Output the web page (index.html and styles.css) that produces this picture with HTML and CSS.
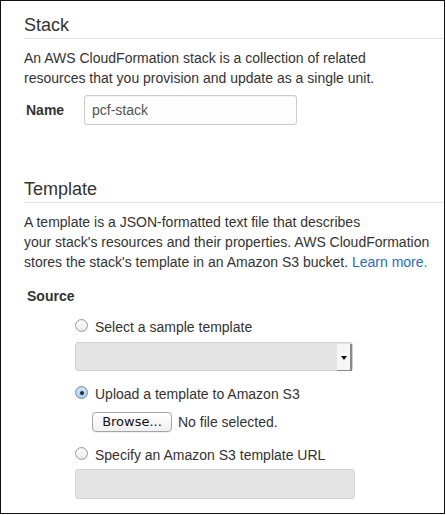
FILE: index.html
```html
<!DOCTYPE html>
<html lang="en">
<head>
<meta charset="utf-8">
<title>Stack</title>
<link rel="stylesheet" href="styles.css">
</head>
<body>
<div class="frame">
  <section class="section">
    <h2 class="heading">Stack</h2>
    <p class="desc">An AWS CloudFormation stack is a collection of related<br>resources that you provision and update as a single unit.</p>
    <div class="field-row">
      <label class="label" for="name">Name</label>
      <input class="text-input" id="name" type="text" value="pcf-stack">
    </div>
  </section>
  <section class="section section-template">
    <h2 class="heading">Template</h2>
    <p class="desc">A template is a JSON-formatted text file that describes<br>your stack's resources and their properties. AWS CloudFormation<br>stores the stack's template in an Amazon S3 bucket. <a class="link" href="#">Learn more.</a></p>
    <div class="source-label">Source</div>
    <div class="options">
      <label class="option">
        <span class="radio"></span>
        <span class="option-text">Select a sample template</span>
      </label>
      <div class="select">
        <span class="select-btn"><span class="arrow"></span></span>
      </div>
      <label class="option option-gap">
        <span class="radio radio-checked"></span>
        <span class="option-text">Upload a template to Amazon S3</span>
      </label>
      <div class="file-row">
        <span class="browse">Browse...</span>
        <span class="file-status">No file selected.</span>
      </div>
      <label class="option option-gap">
        <span class="radio"></span>
        <span class="option-text">Specify an Amazon S3 template URL</span>
      </label>
      <div class="url-input"></div>
    </div>
  </section>
</div>
</body>
</html>
```

FILE: styles.css
```css
html, body {
  margin: 0;
  padding: 0;
  background: #fff;
}

body {
  font-family: "Liberation Sans", Arial, sans-serif;
  font-size: 14px;
  color: #333;
}

.frame {
  width: 445px;
  height: 514px;
  box-sizing: border-box;
  border: 1px solid #111;
  padding-left: 23px;
  overflow: hidden;
}

.heading {
  margin: 13px 0 0 0;
  font-size: 18px;
  font-weight: normal;
  line-height: 22px;
  padding-bottom: 2px;
  border-bottom: 1px solid #e3e3e3;
  color: #333;
}

.section-template .heading {
  margin-top: 53px;
}

.desc {
  margin: 9px 0 0 0;
  line-height: 20px;
}

.link {
  color: #1f6dc6;
  text-decoration: none;
}

.field-row {
  display: flex;
  align-items: center;
  margin-top: 7px;
  padding-left: 2px;
}

.label {
  width: 58px;
  font-weight: bold;
  color: #333;
}

.text-input {
  width: 213px;
  height: 30px;
  box-sizing: border-box;
  border: 1px solid #ccc;
  border-radius: 3px;
  padding: 0 7px;
  font-family: "Liberation Sans", Arial, sans-serif;
  font-size: 14px;
  color: #555;
  background: #fdfdfd;
  box-shadow: inset 0 1px 1px rgba(0,0,0,0.05);
  outline: none;
}

.source-label {
  margin-top: 14px;
  padding-left: 3px;
  font-weight: bold;
  line-height: 20px;
}

.options {
  padding-left: 51px;
  margin-top: 11px;
}

.option {
  display: flex;
  align-items: flex-start;
  line-height: 20px;
}

.option-gap {
  margin-top: 13px;
}

.radio {
  width: 13px;
  height: 13px;
  box-sizing: border-box;
  border-radius: 50%;
  border: 1px solid #9a9a9a;
  background: linear-gradient(#ffffff, #e9e9e9);
  margin-top: 2px;
  margin-right: 7px;
  flex: none;
  position: relative;
  box-shadow: inset 0 1px 1px rgba(0,0,0,0.08);
}

.radio-checked {
  border-color: #6f8fb3;
  background: linear-gradient(#d7e6f7, #a9c9ee);
}

.radio-checked::after {
  content: "";
  position: absolute;
  left: 3.5px;
  top: 3.5px;
  width: 4px;
  height: 4px;
  border-radius: 50%;
  background: #1c2a3a;
}

.option-text {
  color: #333;
}

.select {
  margin-top: 5px;
  width: 278px;
  height: 29px;
  box-sizing: border-box;
  border: 1px solid #d2d2d2;
  border-radius: 3px;
  background: #e4e4e4;
  display: flex;
  justify-content: flex-end;
  padding: 1px 0 0 0;
}

.select-btn {
  width: 15px;
  height: 27px;
  box-sizing: border-box;
  background: #f6f6f6;
  border-right: 2px solid #8a8a8a;
  border-bottom: 1px solid #8a8a8a;
  display: flex;
  align-items: center;
  justify-content: center;
}

.arrow {
  width: 0;
  height: 0;
  border-left: 3px solid transparent;
  border-right: 3px solid transparent;
  border-top: 4px solid #111;
  margin-top: 2px;
}

.file-row {
  display: flex;
  align-items: center;
  margin-top: 8px;
  padding-left: 17px;
}

.browse {
  width: 80px;
  height: 20px;
  box-sizing: border-box;
  border: 1px solid #a4a4a4;
  border-radius: 4px;
  background: linear-gradient(#ffffff, #f1f1f1);
  font-family: "DejaVu Sans", sans-serif;
  font-size: 13px;
  color: #111;
  display: flex;
  align-items: center;
  justify-content: center;
  line-height: 18px;
  box-shadow: 0 1px 0 rgba(0,0,0,0.06);
}

.file-status {
  margin-left: 6px;
  color: #333;
}

.url-input {
  margin-top: 4px;
  width: 280px;
  height: 30px;
  box-sizing: border-box;
  border: 1px solid #d6d6d6;
  border-radius: 3px;
  background: #e4e4e4;
}
```
